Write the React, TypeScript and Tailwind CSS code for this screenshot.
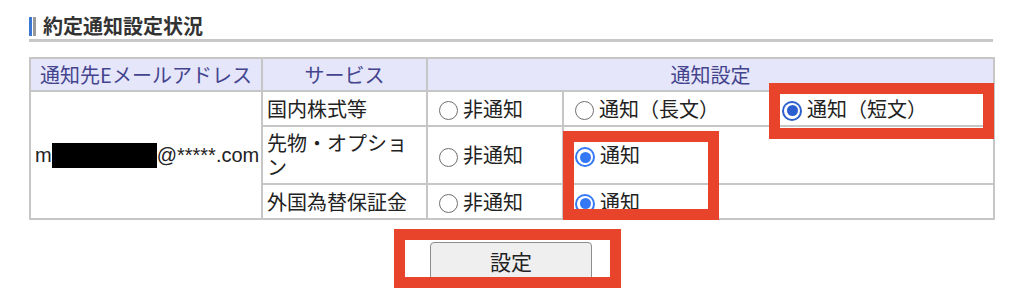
import React from "react";

const JP = "font-['Noto_Sans_CJK_JP','Noto_Sans',sans-serif]";

function Radio({ checked, dark }: { checked?: boolean; dark?: boolean }) {
  if (!checked) {
    return (
      <span className="inline-block w-[19px] h-[19px] rounded-full border-[1.5px] border-[#6f6f6f] bg-white shrink-0 translate-y-[2px]" />
    );
  }
  return (
    <span
      className={`inline-flex items-center justify-center w-[20px] h-[20px] rounded-full shrink-0 translate-y-[2px] ${
        dark ? "bg-[#2b5fcf]" : "bg-[#3478f6]"
      }`}
    >
      <span className="flex items-center justify-center w-[16px] h-[16px] rounded-full bg-white">
        <span className={`w-[11px] h-[11px] rounded-full ${dark ? "bg-[#2b5fcf]" : "bg-[#3478f6]"}`} />
      </span>
    </span>
  );
}

function Option({ label, checked, dark }: { label: string; checked?: boolean; dark?: boolean }) {
  return (
    <div className="flex items-center gap-[5px] pl-[11px]">
      <Radio checked={checked} dark={dark} />
      <span>{label}</span>
    </div>
  );
}

export default function App() {
  const th = "border-2 border-[#c6c6c6] bg-[#e6e6fa] text-[#44448e] font-normal text-center px-1 h-[33px]";
  const td = "border-2 border-[#c6c6c6] align-middle";

  return (
    <div className={`relative w-[1024px] h-[300px] bg-white text-[#222] ${JP}`}>
      <div className="pl-[29px] pr-[31px] pt-[13px]">
        {/* heading */}
        <div className="flex items-center h-[26px]">
          <span className="w-[3px] h-[19px] bg-[#3a78d4]" />
          <span className="w-[3px] h-[19px] bg-[#9a9a9a] ml-[1px]" />
          <span className="ml-[7px] text-[20px] font-bold leading-[26px] text-[#333]">約定通知設定状況</span>
        </div>
        <div className="h-[3px] bg-[#c8c8c8]" />

        <table className="mt-[15px] w-[964px] table-fixed border-collapse text-[20px] leading-[24px]">
          <colgroup>
            <col className="w-[232px]" />
            <col className="w-[165px]" />
            <col className="w-[136px]" />
            <col className="w-[207px]" />
            <col className="w-[224px]" />
          </colgroup>
          <thead>
            <tr>
              <th className={th}>通知先Eメールアドレス</th>
              <th className={th}>サービス</th>
              <th className={th} colSpan={3}>
                通知設定
              </th>
            </tr>
          </thead>
          <tbody>
            <tr className="h-[35px]">
              <td className={`${td} pl-[4px] whitespace-nowrap font-['Liberation_Sans',sans-serif]`} rowSpan={3}>
                <span className="inline-flex items-center">
                  m
                  <span className="inline-block w-[105px] h-[25px] bg-black" />
                  @*****.com
                </span>
              </td>
              <td className={`${td} px-[4px]`}>国内株式等</td>
              <td className={td}>
                <Option label="非通知" />
              </td>
              <td className={td}>
                <Option label="通知（長文）" />
              </td>
              <td className={td}>
                <Option label="通知（短文）" checked dark />
              </td>
            </tr>
            <tr className="h-[58px]">
              <td className={`${td} px-[4px] py-[4px]`}>先物・オプション</td>
              <td className={td}>
                <Option label="非通知" />
              </td>
              <td className={td} colSpan={2}>
                <Option label="通知" checked />
              </td>
            </tr>
            <tr className="h-[35px]">
              <td className={`${td} px-[4px]`}>外国為替保証金</td>
              <td className={td}>
                <Option label="非通知" />
              </td>
              <td className={td} colSpan={2}>
                <Option label="通知" checked />
              </td>
            </tr>
          </tbody>
        </table>

        <div className="flex justify-center mt-[22px]">
          <button className="w-[162px] h-[38px] rounded-[4px] border border-[#8c8c8c] bg-[#efefef] text-[21px] text-[#222] leading-none">
            設定
          </button>
        </div>
      </div>

      {/* red annotation boxes */}
      <div className="absolute left-[769px] top-[83px] w-[225px] h-[56px] border-[11px] border-[#e8432b]" />
      <div className="absolute left-[563px] top-[131px] w-[156px] h-[89px] border-[11px] border-[#e8432b]" />
      <div className="absolute left-[394px] top-[229px] w-[227px] h-[59px] border-[11px] border-[#e8432b]" />
    </div>
  );
}
